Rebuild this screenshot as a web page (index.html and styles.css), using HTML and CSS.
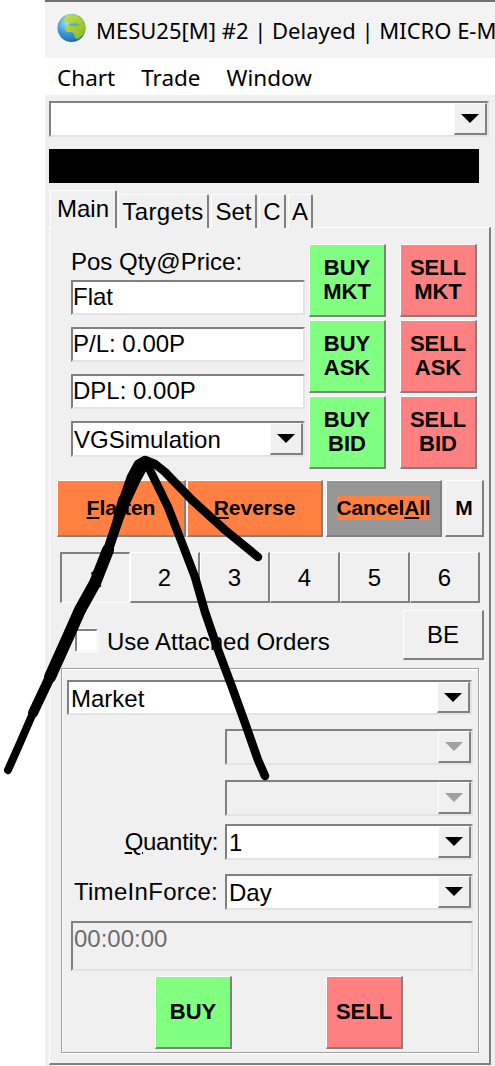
FILE: index.html
```html
<!DOCTYPE html>
<html lang="en">

<head>
    <meta charset="UTF-8">
    <title>MESU25[M] #2 | Delayed</title>
    <link rel="stylesheet" href="styles.css">
</head>

<body>
    <div class="app">
        <div class="titlebar">
            <svg class="globe" width="29" height="30" viewBox="0 0 29 30">
                <defs>
                    <radialGradient id="sea" cx="35%" cy="30%" r="80%">
                        <stop offset="0" stop-color="#a8e0f4" />
                        <stop offset="0.5" stop-color="#3a9ad6" />
                        <stop offset="1" stop-color="#15609e" />
                    </radialGradient>
                    <linearGradient id="land" x1="0" y1="0" x2="1" y2="1">
                        <stop offset="0" stop-color="#c4e24e" />
                        <stop offset="1" stop-color="#86b81e" />
                    </linearGradient>
                </defs>
                <circle cx="14.5" cy="15" r="14" fill="url(#sea)" />
                <path d="M9 3 L14 1.2 L20 2 L25 6 L28 11 L28.5 17 L26 22 L21 26 L18 25 L17 21 L15 19 L10.5 19 L8 16 L9 12.5 L13 11 L11 9 L8 9 L6.5 6 Z" fill="url(#land)" />
                <path d="M12 11 L19 10 L23 12 L19 13 L14 13 Z" fill="#5aa6cf" />
                <path d="M8 2.5 L12 2 L11 5 L8 5 Z" fill="#b5d95a" />
            </svg>
            <span class="title-text">MESU25[M] #2 | Delayed | MICRO E-MINI S&amp;P 500</span>
        </div>
        <div class="menubar">
            <span>Chart</span>
            <span>Trade</span>
            <span>Window</span>
        </div>
        <div class="panel">
            <div class="combo combo-symbol">
                <div class="combo-text"></div>
                <div class="combo-btn"><i class="arrow"></i></div>
            </div>
            <div class="black-bar"></div>
            <div class="tabs">
                <div class="tab tab-active">Main</div>
                <div class="tab tab-targets">Targets</div>
                <div class="tab tab-set">Set</div>
                <div class="tab tab-c">C</div>
                <div class="tab tab-a">A</div>
            </div>
            <div class="pane">
                <div class="order-row">
                    <div class="pos-col">
                        <div class="pos-label">Pos Qty@Price:</div>
                        <div class="field">Flat</div>
                        <div class="field">P/L: 0.00P</div>
                        <div class="field">DPL: 0.00P</div>
                        <div class="combo">
                            <div class="combo-text">VGSimulation</div>
                            <div class="combo-btn"><i class="arrow"></i></div>
                        </div>
                    </div>
                    <div class="btn-col">
                        <div class="btn trade buy">BUY<br>MKT</div>
                        <div class="btn trade buy">BUY<br>ASK</div>
                        <div class="btn trade buy">BUY<br>BID</div>
                    </div>
                    <div class="btn-col">
                        <div class="btn trade sell">SELL<br>MKT</div>
                        <div class="btn trade sell">SELL<br>ASK</div>
                        <div class="btn trade sell">SELL<br>BID</div>
                    </div>
                </div>

                <div class="action-row">
                    <div class="btn action flatten"><span><u>F</u>latten</span></div>
                    <div class="btn action reverse"><span><u>R</u>everse</span></div>
                    <div class="btn action cancel"><span class="cancel-label">Cancel<u>A</u>ll</span></div>
                    <div class="btn action small-m">M</div>
                </div>

                <div class="num-row">
                    <div class="btn num pressed">1</div>
                    <div class="btn num">2</div>
                    <div class="btn num">3</div>
                    <div class="btn num">4</div>
                    <div class="btn num">5</div>
                    <div class="btn num">6</div>
                </div>

                <div class="attached-row">
                    <div class="checkbox"></div>
                    <span class="check-label">Use Attached Orders</span>
                    <div class="btn be">BE</div>
                </div>

                <div class="group">
                    <div class="combo combo-type">
                        <div class="combo-text">Market</div>
                        <div class="combo-btn"><i class="arrow"></i></div>
                    </div>
                    <div class="form-row row-a">
                        <div class="combo combo-form disabled">
                            <div class="combo-text"></div>
                            <div class="combo-btn"><i class="arrow"></i></div>
                        </div>
                    </div>
                    <div class="form-row row-b">
                        <div class="combo combo-form disabled">
                            <div class="combo-text"></div>
                            <div class="combo-btn"><i class="arrow"></i></div>
                        </div>
                    </div>
                    <div class="form-row row-c">
                        <label class="form-label label-qty"><u>Q</u>uantity:</label>
                        <div class="combo combo-form">
                            <div class="combo-text">1</div>
                            <div class="combo-btn"><i class="arrow"></i></div>
                        </div>
                    </div>
                    <div class="form-row row-d">
                        <label class="form-label label-tif">TimeInForce:</label>
                        <div class="combo combo-form">
                            <div class="combo-text">Day</div>
                            <div class="combo-btn"><i class="arrow"></i></div>
                        </div>
                    </div>
                    <div class="timer">00:00:00</div>
                    <div class="submit-row">
                        <div class="btn trade buy submit">BUY</div>
                        <div class="btn trade sell submit">SELL</div>
                    </div>
                </div>
            </div>
        </div>
    </div>

    <!-- hand drawn scribble on top of the screenshot -->
    <svg class="scribble" width="495" height="1066" viewBox="0 0 495 1066">
        <path class="ink ink-thin" d="M8 770 L20 743 L33 713" />
        <path class="ink ink-mid" d="M33 713 L50 677" />
        <path class="ink ink-thick" d="M50 677 L68 637 L80 610 L95 583 L108 550" />
        <path class="ink ink-mid" d="M108 550 L117 523 L123 500" />
        <path class="ink" d="M123 500 L131 477 L138 464 L145 460 L155 464 L165 472 L192 500 L225 530 L258 557" />
        <path class="ink ink-thin" d="M146 463 L136 481 L125 505 L117 525" />
        <path class="ink" d="M148 466 L168 507 L182 543 L195 577 L205 612 L217 647 L232 687 L245 723 L258 760 L265 776" />
    </svg>
</body>

</html>
```

FILE: styles.css
```css
* {
    box-sizing: border-box;
}

html,
body {
    height: 1066px;
}

body {
    position: relative;
    margin: 0;
    overflow: hidden;
    background: #fff;
    color: #000;
    font-family: 'Liberation Sans', Arial, sans-serif;
    font-size: 24px;
}

.app {
    width: 450px;
    margin-left: 45px;
    overflow: hidden;
}

.titlebar {
    display: flex;
    align-items: center;
    height: 58px;
    padding-left: 12px;
    border-top: 2px solid #707070;
    background: #f3f3f3;
    white-space: nowrap;
}

.globe {
    flex: none;
    margin-bottom: 4px;
}

.title-text {
    margin-left: 10px;
    font-family: 'Noto Sans', sans-serif;
    font-size: 22px;
}

.menubar {
    display: flex;
    align-items: center;
    gap: 26px;
    height: 37px;
    padding: 1px 0 0 12px;
    background: #fff;
    font-family: 'Noto Sans', sans-serif;
    font-size: 22.5px;
}

.panel {
    height: 971px;
    padding: 6px 0 0 4px;
    background: #f0f0f0;
}

/* bevels */
.btn {
    display: flex;
    align-items: center;
    justify-content: center;
    border: 1px solid;
    border-color: #fff #808080 #808080 #fff;
    border-width: 1px 2px 2px 1px;
    background: #f0f0f0;
    text-align: center;
}

.combo,
.field {
    border: 2px solid;
    border-color: #808080 #e3e3e3 #e3e3e3 #808080;
    background: #fff;
}

.combo {
    display: flex;
    height: 36px;
}

.combo-text {
    flex: 1;
    padding: 2px 0 0 2px;
    line-height: 30px;
}

.combo-btn {
    display: flex;
    flex: none;
    align-items: center;
    justify-content: center;
    width: 33px;
    border: 1px solid;
    border-color: #fff #808080 #808080 #fff;
    border-width: 1px 2px 2px 1px;
    background: #f0f0f0;
}

.arrow {
    display: block;
    width: 0;
    height: 0;
    border-top: 9px solid #000;
    border-right: 9px solid transparent;
    border-left: 9px solid transparent;
}

.combo-symbol {
    width: 440px;
}

.black-bar {
    width: 430px;
    height: 34px;
    margin-top: 12px;
    background: #000;
}

.tabs {
    display: flex;
    align-items: flex-end;
    height: 37px;
    margin: 8px 0 -1px 1px;
}

.tab {
    position: relative;
    height: 34px;
    margin-right: 2px;
    border: 1px solid;
    border-color: #fff #808080 #fff #fff;
    border-width: 1px 2px 0 1px;
    border-radius: 2px 2px 0 0;
    background: #f0f0f0;
    text-align: center;
    line-height: 34px;
}

.tab-active {
    z-index: 1;
    width: 67px;
    height: 38px;
    margin-right: 1px;
    line-height: 36px;
}

.tab-targets {
    width: 91px;
    letter-spacing: 0.4px;
}

.tab-set {
    width: 46px;
}

.tab-c {
    width: 27px;
}

.tab-a {
    width: 25px;
}

.pane {
    width: 442px;
    height: 838px;
    border: 1px solid;
    border-color: #fff #808080 #808080 #fff;
    border-width: 1px 2px 2px 1px;
}

.order-row {
    display: flex;
    margin: 16px 0 0 21px;
}

.pos-col {
    width: 234px;
}

.pos-col .combo-text {
    padding-left: 1px;
}

.pos-label {
    height: 36px;
    line-height: 36px;
}

.pos-col .field,
.pos-col .combo {
    margin-bottom: 12px;
}

.field {
    height: 35px;
    line-height: 30px;
}

.btn-col {
    display: flex;
    flex-direction: column;
    gap: 3px;
    width: 77px;
    margin-left: 4px;
}

.btn-col + .btn-col {
    margin-left: 14px;
}

.trade {
    height: 73px;
    font-size: 22px;
    font-weight: 700;
    line-height: 24px;
}

.buy {
    background: #80ff80;
}

.sell {
    background: #ff8080;
}

.action-row {
    display: flex;
    height: 57px;
    margin: 11px 0 0 7px;
}

.action {
    font-size: 21px;
    font-weight: 700;
}

.flatten {
    width: 129px;
    margin-right: 1px;
    background: #ff8040;
}

.reverse {
    width: 136px;
    margin-right: 3px;
    background: #ff8040;
}

.cancel {
    width: 116px;
    margin-right: 3px;
    background: #969696;
}

.cancel-label {
    background: #ff8040;
    letter-spacing: -0.2px;
}

.small-m {
    width: 39px;
}

.num-row {
    display: flex;
    height: 51px;
    margin: 15px 0 0 10px;
}

.num {
    width: 70px;
    padding-top: 1px;
}

.num.pressed {
    border-color: #808080 #fff #fff #808080;
    border-width: 2px 1px 1px 2px;
}

.attached-row {
    display: flex;
    align-items: flex-end;
    height: 50px;
    margin: 7px 5px 0 25px;
}

.checkbox {
    width: 23px;
    height: 23px;
    margin-bottom: 8px;
    border: 2px solid;
    border-color: #808080 #f8f8f8 #f8f8f8 #808080;
    background: #fff;
    box-shadow: 0 0 0 1px #f8f8f8;
}

.check-label {
    margin: 0 0 4px 9px;
}

.be {
    width: 81px;
    height: 50px;
    margin-left: auto;
}

.group {
    width: 418px;
    height: 385px;
    margin: 8px 0 0 11px;
    border: 1px solid #a0a0a0;
    box-shadow: inset 1px 1px #fff, 1px 1px #fff;
}

.combo-type {
    width: 405px;
    height: 35px;
    margin: 11px 0 0 5px;
}

.form-row {
    display: flex;
    align-items: center;
    padding-left: 163px;
}

.form-row:has(.form-label) {
    padding-left: 0;
}

.form-label {
    width: 156px;
    margin-right: 7px;
    text-align: right;
    white-space: nowrap;
}

.label-qty {
    letter-spacing: -0.3px;
}

.label-tif {
    letter-spacing: 0.3px;
}

.combo-form {
    width: 248px;
}

.row-a {
    margin-top: 14px;
}

.row-b {
    margin-top: 15px;
}

.row-c {
    margin-top: 8px;
}

.row-d {
    margin-top: 14px;
}

.disabled,
.disabled .combo-btn {
    background: #f0f0f0;
}

.disabled .arrow {
    border-top-color: #a0a0a0;
}

.timer {
    width: 402px;
    height: 50px;
    margin: 11px 0 0 9px;
    padding: 1px 0 0 1px;
    border: 2px solid;
    border-color: #808080 #e3e3e3 #e3e3e3 #808080;
    color: #6d6d6d;
    line-height: 30px;
}

.submit-row {
    display: flex;
    gap: 94px;
    margin: 5px 0 0 93px;
}

.submit {
    width: 77px;
}

.scribble {
    position: absolute;
    top: 0;
    left: 0;
    pointer-events: none;
}

.ink {
    fill: none;
    stroke: #000;
    stroke-width: 8.5;
    stroke-linecap: round;
    stroke-linejoin: round;
}

.ink-thin {
    stroke-width: 8;
}

.ink-mid {
    stroke-width: 10;
}

.ink-thick {
    stroke-width: 12;
}
```
